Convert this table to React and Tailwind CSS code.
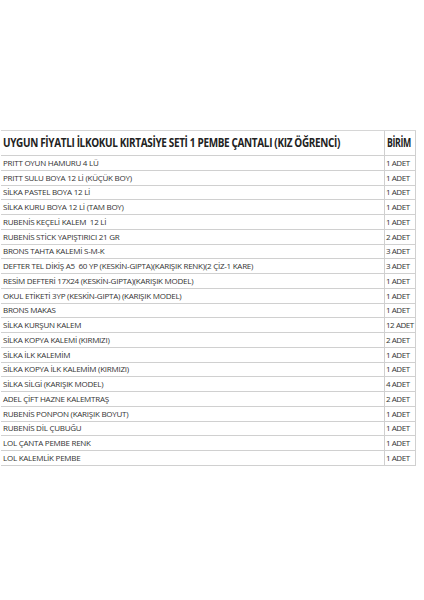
const rows = [
  ['PRITT OYUN HAMURU 4 LÜ', '1 ADET'],
  ['PRITT SULU BOYA 12 Lİ (KÜÇÜK BOY)', '1 ADET'],
  ['SİLKA PASTEL BOYA 12 Lİ', '1 ADET'],
  ['SİLKA KURU BOYA 12 Lİ (TAM BOY)', '1 ADET'],
  ['RUBENİS KEÇELİ KALEM  12 Lİ', '1 ADET'],
  ['RUBENİS STİCK YAPIŞTIRICI 21 GR', '2 ADET'],
  ['BRONS TAHTA KALEMİ S-M-K', '3 ADET'],
  ['DEFTER TEL DİKİŞ A5  60 YP (KESKİN-GIPTA)(KARIŞIK RENK)(2 ÇİZ-1 KARE)', '3 ADET'],
  ['RESİM DEFTERİ 17X24 (KESKİN-GIPTA)(KARIŞIK MODEL)', '1 ADET'],
  ['OKUL ETİKETİ 3YP (KESKİN-GIPTA) (KARIŞIK MODEL)', '1 ADET'],
  ['BRONS MAKAS', '1 ADET'],
  ['SİLKA KURŞUN KALEM', '12 ADET'],
  ['SİLKA KOPYA KALEMİ (KIRMIZI)', '2 ADET'],
  ['SİLKA İLK KALEMİM', '1 ADET'],
  ['SİLKA KOPYA İLK KALEMİM (KIRMIZI)', '1 ADET'],
  ['SİLKA SİLGİ (KARIŞIK MODEL)', '4 ADET'],
  ['ADEL ÇİFT HAZNE KALEMTRAŞ', '2 ADET'],
  ['RUBENİS PONPON (KARIŞIK BOYUT)', '1 ADET'],
  ['RUBENİS DİL ÇUBUĞU', '1 ADET'],
  ['LOL ÇANTA PEMBE RENK', '1 ADET'],
  ['LOL KALEMLİK PEMBE', '1 ADET'],
]

export default function App() {
  return (
    <div className="w-[424px] h-[600px] bg-white pt-[130px] pl-[1px] font-['Open_Sans',sans-serif] text-[#333]">
      <div className="w-[415px] border-t border-[#d6d6d6]">
        <div className="flex h-[25px] border-b border-[#d0d0d0]">
          <div className="w-[384px] shrink-0 flex items-center pl-[2px] border-r border-[#d0d0d0] text-[12px] font-bold tracking-[-0.4px] text-[#222] whitespace-nowrap overflow-hidden">
            <span className="inline-block origin-left scale-x-[0.83]">
              UYGUN FİYATLI İLKOKUL KIRTASİYE SETİ 1 PEMBE ÇANTALI (KIZ ÖĞRENCİ)
            </span>
          </div>
          <div className="w-[31px] shrink-0 flex items-center pl-[2px] border-r border-[#d0d0d0] text-[11.5px] font-bold tracking-[-0.5px] text-[#222] whitespace-nowrap">
            <span className="inline-block origin-left scale-x-[0.76]">BİRİM</span>
          </div>
        </div>
        {rows.map(([name, unit], i) => (
          <div key={i} className="flex h-[14.75px] border-b border-[#d0d0d0] text-[8px] leading-none">
            <div className="w-[384px] shrink-0 flex items-center pl-[2px] border-r border-[#d0d0d0] tracking-[-0.25px] whitespace-pre overflow-hidden">
              {name}
            </div>
            <div className="w-[31px] shrink-0 flex items-center pl-[1px] border-r border-[#d0d0d0] tracking-[-0.45px] whitespace-nowrap">
              {unit}
            </div>
          </div>
        ))}
      </div>
    </div>
  )
}
